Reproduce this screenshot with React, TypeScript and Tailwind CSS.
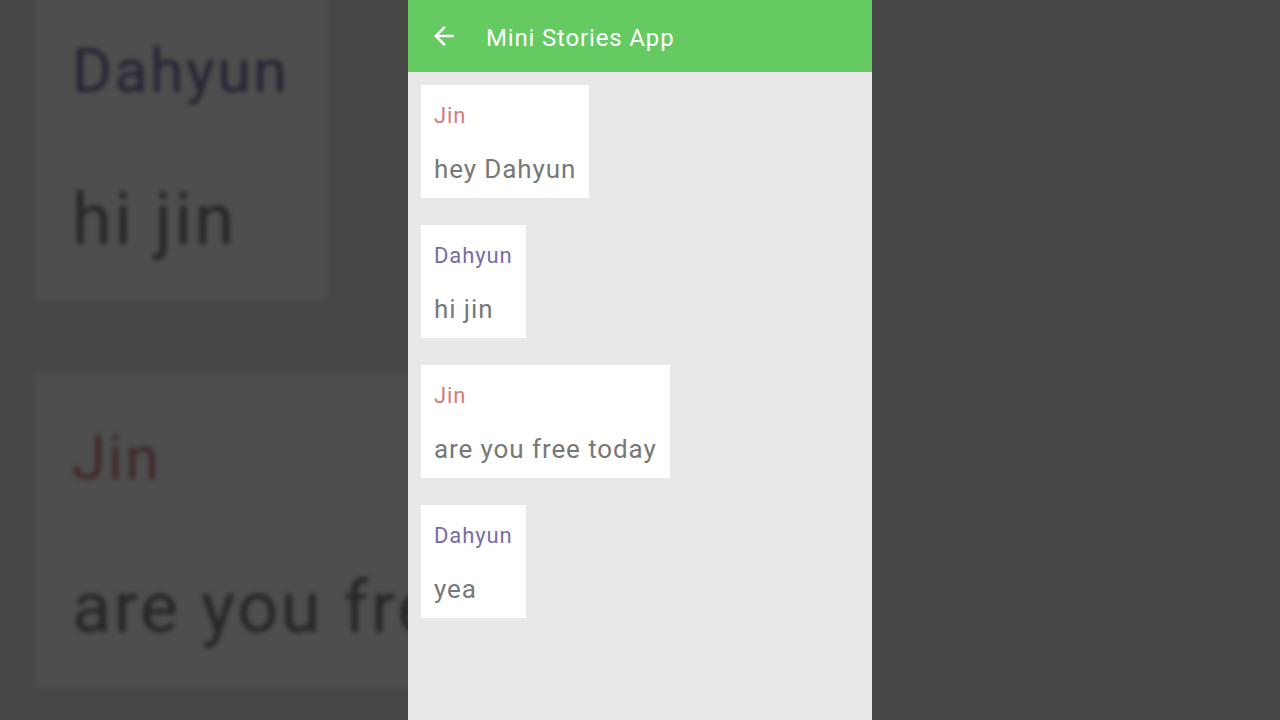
import React from 'react';

type Message = { author: 'Jin' | 'Dahyun'; text: string };

const messages: Message[] = [
  { author: 'Jin', text: 'hey Dahyun' },
  { author: 'Dahyun', text: 'hi jin' },
  { author: 'Jin', text: 'are you free today' },
  { author: 'Dahyun', text: 'yea' },
];

const BackArrow = () => (
  <svg width="30" height="30" viewBox="0 0 24 24" fill="currentColor">
    <path d="M20 11H7.83l5.59-5.59L12 4l-8 8 8 8 1.41-1.41L7.83 13H20v-2z" />
  </svg>
);

const Screen: React.FC = () => {
  return (
    <div className="w-[464px] h-[720px] bg-[#e8e8e8] flex flex-col font-['Roboto',sans-serif]">
      {/* Toolbar */}
      <div className="h-[72px] shrink-0 bg-[#66ca62] flex items-center pl-[21px] text-white">
        <BackArrow />
        <span className="ml-[27px] pt-[3px] text-[24px] leading-[30px] tracking-[0.035em]">Mini Stories App</span>
      </div>

      {/* Story messages */}
      <div className="flex flex-col items-start gap-[27px] pt-[13px] px-[13px]">
        {messages.map((m, i) => (
          <div key={i} className="bg-white h-[113px] px-[13px] pt-[16px]">
            <p
              className={`text-[22px] leading-[30px] tracking-[0.04em] ${
                m.author === 'Jin' ? 'text-[#d07c7c]' : 'text-[#7b6ba3]'
              }`}
            >
              {m.author}
            </p>
            <p className="mt-[21px] text-[26px] leading-[34px] tracking-[0.035em] text-[#787878] whitespace-nowrap">
              {m.text}
            </p>
          </div>
        ))}
      </div>
    </div>
  );
};

export default function App() {
  return (
    <div className="relative w-full h-screen overflow-hidden bg-[#474747]">
      {/* blurred, zoomed backdrop */}
      <div className="absolute left-0 top-[-637px] origin-top-left scale-[2.77] brightness-[0.306] blur-[1px] pointer-events-none">
        <Screen />
      </div>

      <div className="relative flex justify-center">
        <Screen />
      </div>
    </div>
  );
}
